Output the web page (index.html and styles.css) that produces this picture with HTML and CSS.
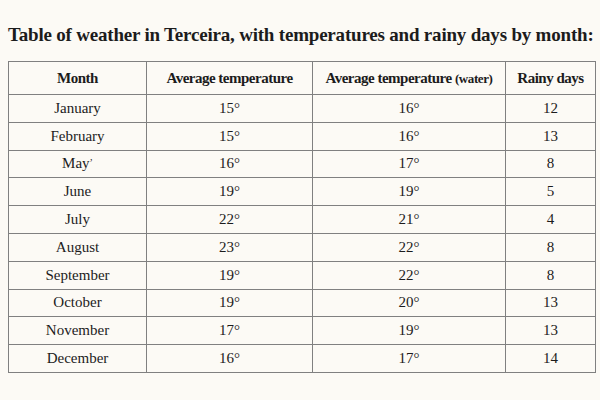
FILE: index.html
```html
<!DOCTYPE html>
<html>
<head>
<meta charset="utf-8">
<link rel="stylesheet" href="styles.css">
</head>
<body>
<div class="page">
  <h1 class="title">Table of weather in Terceira, with temperatures and rainy days by month:</h1>
  <table class="weather">
    <colgroup>
      <col class="c1"><col class="c2"><col class="c3"><col class="c4">
    </colgroup>
    <thead>
      <tr><th>Month</th><th>Average temperature</th><th>Average temperature <span class="small">(water)</span></th><th>Rainy days</th></tr>
    </thead>
    <tbody>
      <tr><td>January</td><td>15°</td><td>16°</td><td>12</td></tr>
      <tr><td>February</td><td>15°</td><td>16°</td><td>13</td></tr>
      <tr><td>May<span class="tick">’</span></td><td>16°</td><td>17°</td><td>8</td></tr>
      <tr><td>June</td><td>19°</td><td>19°</td><td>5</td></tr>
      <tr><td>July</td><td>22°</td><td>21°</td><td>4</td></tr>
      <tr><td>August</td><td>23°</td><td>22°</td><td>8</td></tr>
      <tr><td>September</td><td>19°</td><td>22°</td><td>8</td></tr>
      <tr><td>October</td><td>19°</td><td>20°</td><td>13</td></tr>
      <tr><td>November</td><td>17°</td><td>19°</td><td>13</td></tr>
      <tr><td>December</td><td>16°</td><td>17°</td><td>14</td></tr>
    </tbody>
  </table>
</div>
</body>
</html>
```
FILE: styles.css
```css
html, body {
  margin: 0;
  padding: 0;
  background: #fcfaf5;
}
body {
  font-family: "Liberation Serif", "DejaVu Serif", serif;
  color: #1c1c1c;
}
.page {
  padding: 24px 5px 0 8px;
}
.title {
  margin: 0 0 15px 0;
  font-size: 19px;
  font-weight: bold;
  line-height: 22px;
  letter-spacing: -0.2px;
  white-space: nowrap;
}
.weather {
  border-collapse: collapse;
  width: 587px;
  table-layout: fixed;
}
.c1 { width: 138px; }
.c2 { width: 166px; }
.c3 { width: 193px; }
.c4 { width: 90px; }
.weather th, .weather td {
  border: 1px solid #808080;
  text-align: center;
  padding: 0;
  font-size: 15px;
}
.weather th {
  height: 32px;
  font-weight: bold;
  letter-spacing: -0.5px;
}
.weather td {
  height: 26.8px;
}
.small {
  font-size: 13px;
  letter-spacing: -0.4px;
}
.tick {
  font-size: 10px;
  vertical-align: 2px;
}
```
